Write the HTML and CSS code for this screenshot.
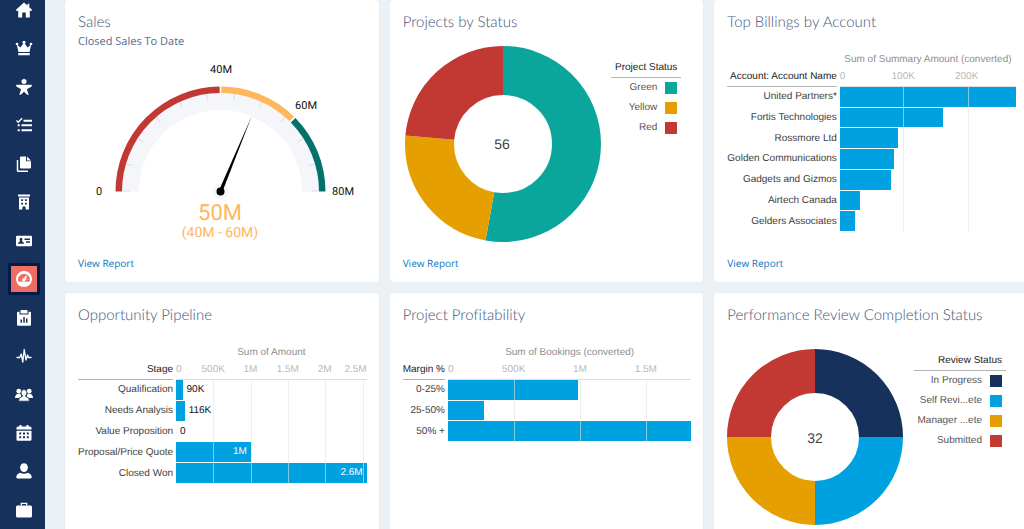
FILE: index.html
```html
<!DOCTYPE html>
<html lang="en">
<head>
<meta charset="utf-8">
<title>Dashboard</title>
<meta name="viewport" content="width=device-width, initial-scale=1">
<link rel="stylesheet" href="styles.css">
</head>
<body>
<nav class="sidebar" aria-label="Main">
  <ul class="nav-list">
    <li><a class="nav-link" href="#home" aria-label="Home"><svg viewBox="0 0 16 16"><path d="M8 .4 0 7.800v.9h2.200v6.700h4V10.500h3.600v4.900h4V8.700H16v-.9L13.300 5.200V1.800h-1.800v1.700z"/></svg></a></li>
    <li><a class="nav-link" href="#leaders" aria-label="Leaders"><svg viewBox="0 0 16 16"><circle cx="8" cy="2.300" r="1.500"/><circle cx="1" cy="4" r="1.300"/><circle cx="15" cy="4" r="1.300"/><path d="M.8 4.500 4.500 7.500 8 2.500l3.500 5 3.700-3-1.700 7.500h-11zM2.300 13h11.400v2.200H2.300z"/></svg></a></li>
    <li><a class="nav-link" href="#people" aria-label="People"><svg viewBox="0 0 16 16"><circle cx="8" cy="2.500" r="2.500"/><path d="M.3 5.800h15.400v1.700l-4.800 2.700 1.800 5.500h-1.500L8 12.700l-3.200 3H3.300l1.800-5.500L.3 7.500z"/></svg></a></li>
    <li><a class="nav-link" href="#tasks" aria-label="Tasks"><svg viewBox="0 0 16 16"><path d="M.5 3.500 2.300 5.200 6 1.200" fill="none" stroke="currentColor" stroke-width="1.500"/><path d="M7.500 2.700H16v2H7.500zM5.500 7.200H16v2H5.500zM5.500 12.200H16v2H5.500zM1.700 7.200h2v2h-2zM1.700 12.200h2v2h-2z"/></svg></a></li>
    <li><a class="nav-link" href="#files" aria-label="Files"><svg viewBox="0 0 16 16"><path d="M5 .5h5v4.800h5v6.200q0 1-1 1H5q-1 0-1-1v-10q0-1 1-1zM11 .5l4 3.900h-4z"/><path d="M1.500 4v10.500q0 .8.8.8H12" fill="none" stroke="currentColor" stroke-width="1.500"/></svg></a></li>
    <li><a class="nav-link" href="#accounts" aria-label="Accounts"><svg viewBox="0 0 16 16"><path fill-rule="evenodd" d="M2 .5h12v2H2zM3 3.500h10v12H9.500v-3h-3v3H3zM5.200 5.200v1.800h1.800V5.200zM9 5.200v1.800h1.800V5.200zM5.200 8.700v1.800h1.800V8.700zM9 8.700v1.800h1.800V8.700z"/></svg></a></li>
    <li><a class="nav-link" href="#contacts" aria-label="Contacts"><svg viewBox="0 0 16 16"><path fill-rule="evenodd" d="M1.200 2.800h13.600Q16 2.800 16 4v8q0 1.200-1.200 1.200H1.200Q0 13.200 0 12V4q0-1.200 1.200-1.200zM5 4.800a1.500 1.700 0 0 0-1 2.900v.6Q2 9 2 10.700h6Q8 9 6 8.300v-.6A1.500 1.700 0 0 0 5 4.800zM8.500 5.500V7H14V5.500zM10 8.300v1.500h4V8.300z"/></svg></a></li>
    <li><a class="nav-link is-active" href="#dashboards" aria-label="Dashboards" aria-current="page"><svg viewBox="0 0 16 16"><path fill-rule="evenodd" d="M8 0a8 8 0 1 0 0 16A8 8 0 0 0 8 0zM2 8.800a6 6 0 0 1 12 0h-2.300L9.500 9a1.700 1.700 0 1 1-1.800-1.800L10 4.500l1 .6-1.300 3.500 4.300.2a6 6 0 0 1-.6 2H2.600a6 6 0 0 1-.6-2z"/></svg></a></li>
    <li><a class="nav-link" href="#reports" aria-label="Reports"><svg viewBox="0 0 16 16"><path fill-rule="evenodd" d="M4.500 0h7v3.500h-7zM2 1.700h1.500v2.800h9V1.700H14q1 0 1 1v12q0 1-1 1H2q-1 0-1-1v-12q0-1 1-1zM4.500 9.500v3.300H6V9.500zM7.300 7v5.800h1.500V7zM10 8.500v4.300h1.500V8.500z"/></svg></a></li>
    <li><a class="nav-link" href="#activity" aria-label="Activity"><svg viewBox="0 0 16 16"><path d="M1 9.500h2.700L5.200 6l1.600 8L8.200 1.500 10 12l1.500-5 1 2.500H15" fill="none" stroke="currentColor" stroke-width="1.300" stroke-linejoin="round" stroke-linecap="round"/></svg></a></li>
    <li><a class="nav-link" href="#groups" aria-label="Groups"><svg viewBox="1 0 16 16"><circle cx="3.800" cy="4.200" r="2.400"/><circle cx="14.200" cy="4.200" r="2.400"/><path d="M0 11q0-3.500 3-4.300h2.500l1 3L4 11zM18 11q0-3.500-3-4.300h-2.500l-1 3L14 11z"/><path d="M9 2.500a3 3.300 0 0 1 1.700 6v1q3.800.8 3.800 4.700h-11q0-3.900 3.800-4.700v-1A3 3.300 0 0 1 9 2.500z" stroke="#16325c" stroke-width=".8"/></svg></a></li>
    <li><a class="nav-link" href="#calendar" aria-label="Calendar"><svg viewBox="0 0 16 16"><path fill-rule="evenodd" d="M3.500 0h2v1.500h5V0h2v1.500H14q1.500 0 1.500 1.500v1.500H.5V3Q.5 1.500 2 1.500h1.500zM.5 5.700h15v8.800q0 1.300-1.300 1.300H1.800Q.5 15.800.5 14.500zM3.200 7.500v2h2v-2zM7 7.500v2h2v-2zM10.800 7.500v2h2v-2zM3.200 11.200v2h2v-2zM7 11.200v2h2v-2zM10.800 11.200v2h2v-2z"/></svg></a></li>
    <li><a class="nav-link" href="#profile" aria-label="Profile"><svg viewBox="0 0 16 16"><ellipse cx="8" cy="4.600" rx="3.900" ry="4.400"/><path d="M.3 14q0-3 4-4.300 3.700 2.300 7.400 0 4 1.300 4 4.300 0 1.500-1.500 1.500H1.800Q.3 15.500.3 14z"/></svg></a></li>
    <li><a class="nav-link" href="#business" aria-label="Business"><svg viewBox="0 0 16 16"><path d="M5.300 3.500V1.400h5.400v2.100" fill="none" stroke="currentColor" stroke-width="1.200"/><rect y="3.500" width="16" height="12" rx="1.500"/></svg></a></li>
  </ul>
</nav>

<main class="dashboard">
  <section class="card">
    <h2 class="card-title">Sales</h2>
    <p class="card-subtitle">Closed Sales To Date</p>
    <svg class="gauge" viewBox="0 0 288 184" role="img" aria-label="Closed sales gauge">
      <path d="M52.500 131.500a90 90 0 0 1 180 0" fill="none" stroke="#f4f6f9" stroke-width="17"/>
      <g stroke="#d8dde6" stroke-width="1">
        <path d="M44.500 131h7"/>
        <path d="M44.500 131.500h6" transform="rotate(16.360 142.500 131.500)"/>
        <path d="M44.500 131.500h6" transform="rotate(32.730 142.500 131.500)"/>
        <path d="M44.500 131.500h6" transform="rotate(49.090 142.500 131.500)"/>
        <path d="M44.500 131.500h6" transform="rotate(65.450 142.500 131.500)"/>
        <path d="M44.500 131.500h6" transform="rotate(81.820 142.500 131.500)"/>
        <path d="M44.500 131.500h6" transform="rotate(98.180 142.500 131.500)"/>
        <path d="M44.500 131.500h6" transform="rotate(114.550 142.500 131.500)"/>
        <path d="M44.500 131.500h6" transform="rotate(130.910 142.500 131.500)"/>
        <path d="M44.500 131.500h6" transform="rotate(147.270 142.500 131.500)"/>
        <path d="M44.500 131.500h6" transform="rotate(163.640 142.500 131.500)"/>
        <path d="M233.500 131h7"/>
      </g>
      <g fill="none" stroke-width="6.500">
        <path d="M40.750 131.500a101.750 101.750 0 0 1 203.500 0" pathLength="180" stroke="#c23934" stroke-dasharray="89.500 300"/>
        <path d="M40.750 131.500a101.750 101.750 0 0 1 203.500 0" pathLength="180" stroke="#ffb75d" stroke-dasharray="44 300" stroke-dashoffset="-90.500"/>
        <path d="M40.750 131.500a101.750 101.750 0 0 1 203.500 0" pathLength="180" stroke="#04716b" stroke-dasharray="44.500 300" stroke-dashoffset="-135.500"/>
      </g>
      <circle cx="142.500" cy="131.500" r="8" fill="#f4f6f9"/>
      <path d="M140.700 131.500 142.500 49.500 144.300 131.500z" transform="rotate(22.500 142.500 131.500)"/>
      <circle cx="142.500" cy="131.500" r="4"/>
      <g class="gauge-label">
        <text x="21" y="135" text-anchor="middle">0</text>
        <text x="143" y="13" text-anchor="middle">40M</text>
        <text x="228" y="49" text-anchor="middle">60M</text>
        <text x="265" y="135" text-anchor="middle">80M</text>
      </g>
      <text class="gauge-value" x="142" y="160" text-anchor="middle">50M</text>
      <text class="gauge-range" x="142" y="177" text-anchor="middle">(40M - 60M)</text>
    </svg>
    <a class="card-link" href="#sales-report">View Report</a>
  </section>

  <section class="card">
    <h2 class="card-title">Projects by Status</h2>
    <div class="donut-chart">
      <svg class="donut donut-large" viewBox="0 0 196 196" role="img" aria-label="56 projects">
        <g fill="none" stroke-width="49" transform="rotate(-90 98 98)">
          <circle cx="98" cy="98" r="73.500" pathLength="360" stroke="#0aa69c" stroke-dasharray="190.300 360"/>
          <circle cx="98" cy="98" r="73.500" pathLength="360" stroke="#e69f00" stroke-dasharray="84.700 360" stroke-dashoffset="-190.300"/>
          <circle cx="98" cy="98" r="73.500" pathLength="360" stroke="#c23934" stroke-dasharray="85 360" stroke-dashoffset="-275"/>
        </g>
        <text class="donut-total" x="97" y="103" text-anchor="middle">56</text>
      </svg>
      <div class="legend">
        <h3 class="legend-title">Project Status</h3>
        <ul class="legend-list">
          <li>Green<i class="swatch teal"></i></li>
          <li>Yellow<i class="swatch yellow"></i></li>
          <li>Red<i class="swatch red"></i></li>
        </ul>
      </div>
    </div>
    <a class="card-link" href="#status-report">View Report</a>
  </section>

  <section class="card">
    <h2 class="card-title">Top Billings by Account</h2>
    <div class="bar-chart">
      <div class="labels">
        <h3 class="labels-title">Account: Account Name</h3>
        <ul class="rows rows-7">
          <li>United Partners*</li>
          <li>Fortis Technologies</li>
          <li>Rossmore Ltd</li>
          <li>Golden Communications</li>
          <li>Gadgets and Gizmos</li>
          <li>Airtech Canada</li>
          <li>Gelders Associates</li>
        </ul>
      </div>
      <div class="plot">
        <h3 class="axis-title">Sum of Summary Amount (converted)</h3>
        <div class="axis"><span class="tick tick-first">0</span><span class="tick" style="left:36%">100K</span><span class="tick" style="left:72%">200K</span></div>
        <div class="rows rows-7 bars">
          <div class="bar" style="width:100%"></div>
          <div class="bar" style="width:58.400%"></div>
          <div class="bar" style="width:32.800%"></div>
          <div class="bar" style="width:30.700%"></div>
          <div class="bar" style="width:29.300%"></div>
          <div class="bar" style="width:11.200%"></div>
          <div class="bar" style="width:8.400%"></div>
          <i class="gridline" style="left:36%"></i><i class="gridline" style="left:72.500%"></i>
        </div>
      </div>
    </div>
    <a class="card-link" href="#billings-report">View Report</a>
  </section>

  <section class="card">
    <h2 class="card-title">Opportunity Pipeline</h2>
    <div class="bar-chart">
      <div class="labels">
        <h3 class="labels-title">Stage</h3>
        <ul class="rows rows-5">
          <li>Qualification</li>
          <li>Needs Analysis</li>
          <li>Value Proposition</li>
          <li>Proposal/Price Quote</li>
          <li>Closed Won</li>
        </ul>
      </div>
      <div class="plot">
        <h3 class="axis-title">Sum of Amount</h3>
        <div class="axis"><span class="tick tick-first">0</span><span class="tick" style="left:19.500%">500K</span><span class="tick" style="left:39%">1M</span><span class="tick" style="left:58.600%">1.5M</span><span class="tick" style="left:78%">2M</span><span class="tick tick-last">2.5M</span></div>
        <div class="rows rows-5 bars">
          <div class="bar-row"><div class="bar" style="width:3.400%"></div><span class="value">90K</span></div>
          <div class="bar-row"><div class="bar" style="width:4.500%"></div><span class="value">116K</span></div>
          <div class="bar-row"><span class="value">0</span></div>
          <div class="bar" style="width:39.300%"><span class="value-inside">1M</span></div>
          <div class="bar" style="width:100%"><span class="value-inside">2.6M</span></div>
          <i class="gridline" style="left:19.500%"></i><i class="gridline" style="left:39.100%"></i><i class="gridline" style="left:58.700%"></i><i class="gridline" style="left:78.300%"></i><i class="gridline" style="left:97.900%"></i>
        </div>
      </div>
    </div>
  </section>

  <section class="card">
    <h2 class="card-title">Project Profitability</h2>
    <div class="bar-chart">
      <div class="labels">
        <h3 class="labels-title">Margin %</h3>
        <ul class="rows rows-3">
          <li>0-25%</li>
          <li>25-50%</li>
          <li>50% +</li>
        </ul>
      </div>
      <div class="plot">
        <h3 class="axis-title">Sum of Bookings (converted)</h3>
        <div class="axis"><span class="tick tick-first">0</span><span class="tick" style="left:27%">500K</span><span class="tick" style="left:54.200%">1M</span><span class="tick" style="left:81.300%">1.5M</span></div>
        <div class="rows rows-3 bars">
          <div class="bar" style="width:53.500%"></div>
          <div class="bar" style="width:14.800%"></div>
          <div class="bar" style="width:100%"></div>
          <i class="gridline" style="left:27.100%"></i><i class="gridline" style="left:54.200%"></i><i class="gridline" style="left:81.300%"></i>
        </div>
      </div>
    </div>
  </section>

  <section class="card">
    <h2 class="card-title">Performance Review Completion Status</h2>
    <div class="donut-chart">
      <svg class="donut donut-small" viewBox="0 0 176 176" role="img" aria-label="32 reviews">
        <g fill="none" stroke-width="44" transform="rotate(-90 88 88)">
          <circle cx="88" cy="88" r="66" pathLength="360" stroke="#16325c" stroke-dasharray="90 360"/>
          <circle cx="88" cy="88" r="66" pathLength="360" stroke="#00a1e0" stroke-dasharray="90 360" stroke-dashoffset="-90"/>
          <circle cx="88" cy="88" r="66" pathLength="360" stroke="#e69f00" stroke-dasharray="90 360" stroke-dashoffset="-180"/>
          <circle cx="88" cy="88" r="66" pathLength="360" stroke="#c23934" stroke-dasharray="90 360" stroke-dashoffset="-270"/>
        </g>
        <text class="donut-total" x="88" y="94" text-anchor="middle">32</text>
      </svg>
      <div class="legend">
        <h3 class="legend-title">Review Status</h3>
        <ul class="legend-list">
          <li>In Progress<i class="swatch navy"></i></li>
          <li>Self Revi...ete<i class="swatch blue"></i></li>
          <li>Manager ...ete<i class="swatch yellow"></i></li>
          <li>Submitted<i class="swatch red"></i></li>
        </ul>
      </div>
    </div>
  </section>
</main>
</body>
</html>
```
FILE: styles.css
```css
* {
  box-sizing: border-box;
}

body {
  margin: 0;
  height: 100vh;
  display: flex;
  overflow: hidden;
  background: #ebf1f4;
  color: #3e3e3c;
  font: 10px/16px "Liberation Sans", Arial, sans-serif;
  text-rendering: geometricPrecision;
}

h2, h3, p, ul {
  margin: 0;
  padding: 0;
  font-weight: 400;
  font-size: inherit;
}

ul {
  list-style: none;
}

/* Sidebar */
.sidebar {
  flex: none;
  width: 45px;
  display: flex;
  padding: 0 5px 3px 8px;
  background: #16325c;
}

.nav-list {
  display: flex;
  flex-direction: column;
  justify-content: space-between;
  margin-top: -6px;
}

.nav-link {
  display: flex;
  align-items: center;
  justify-content: center;
  width: 32px;
  height: 32px;
  color: #fff;
}

.nav-link svg {
  flex: none;
  width: 16px;
  height: 16px;
  fill: currentColor;
  overflow: visible;
}

.nav-link.is-active {
  border: 3px solid #04184a;
  border-radius: 2px;
  background: #ef6e64;
}

/* Dashboard grid */
.dashboard {
  flex: 1;
  min-width: 0;
  display: grid;
  grid-template-columns: repeat(3, minmax(0, 1fr));
  grid-template-rows: auto 1fr;
  gap: 11px;
  margin-right: -4px;
  padding-left: 20px;
}

.card {
  display: flex;
  flex-direction: column;
  padding: 12px 12px 9px 13px;
  background: #fff;
  border-radius: 3px;
  box-shadow: 0 0 1px #cfd8e0;
}

.card-title {
  color: #3f557d;
  font: 300 15px/20px Lato, "Open Sans", sans-serif;
  font-variant-ligatures: none;
  white-space: nowrap;
}

.card-subtitle {
  color: #54698d;
  font: 400 11px/20px "Open Sans", "Noto Sans", sans-serif;
}

.card-link {
  align-self: flex-start;
  margin-top: auto;
  color: #1077bd;
  font: 400 10px/20px "Open Sans", "Noto Sans", sans-serif;
  text-decoration: none;
}

/* Gauge */
.gauge {
  width: 288px;
  max-width: 100%;
  margin: 8px 0 9px;
}

.gauge text {
  font-family: Roboto, sans-serif;
}

.gauge-label {
  font-size: 11px;
  fill: #111;
}

.gauge-value {
  font-size: 22px;
  fill: #ffb75d;
}

.gauge-range {
  font-size: 14px;
  fill: #ffb75d;
}

/* Donut charts */
.donut-chart {
  display: flex;
  align-items: flex-start;
  justify-content: space-between;
  padding-right: 10px;
}

.donut {
  flex: none;
}

.donut-large {
  width: 196px;
  margin: 14px 0 10px 2px;
}

.donut-small {
  width: 176px;
  margin-top: 24px;
}

.donut-total {
  font-size: 14px;
  fill: #444;
}

.legend {
  margin-top: 27px;
  text-align: right;
  white-space: nowrap;
}

.legend-title {
  padding: 0 4px;
  border-bottom: 1px solid #b4b4b4;
  color: #222;
  line-height: 18px;
}

.legend-list {
  padding: 0 4px;
  color: #555;
  line-height: 20px;
}

.legend-list li {
  display: flex;
  align-items: center;
  justify-content: flex-end;
  gap: 8px;
}

.swatch {
  width: 12px;
  height: 12px;
}

.teal { background: #0aa69c; }
.yellow { background: #e69f00; }
.red { background: #c23934; }
.navy { background: #16325c; }
.blue { background: #00a1e0; }

/* Bar charts */
.bar-chart {
  display: flex;
  gap: 3px;
  margin-top: 20px;
}

.labels {
  flex: none;
  padding-top: 16px;
  text-align: right;
}

.labels-title {
  border-bottom: 1px solid #b4b4b4;
  color: #222;
  line-height: 18px;
}

.rows {
  display: grid;
  grid-auto-rows: minmax(0, 1fr);
  align-items: center;
}

.rows-7 { height: 145px; }
.rows-5 { height: 104px; }
.rows-3 { height: 62px; }

.plot {
  flex: 1;
}

.axis-title {
  color: #8e8e8e;
  text-align: center;
}

.axis {
  position: relative;
  height: 19px;
  border-bottom: 1px solid #dcdcdc;
  color: #b8b8b8;
  line-height: 18px;
}

.tick {
  position: absolute;
  transform: translateX(-50%);
}

.tick-first {
  left: 0;
  transform: none;
}

.tick-last {
  right: 0;
  transform: none;
}

.bars {
  position: relative;
  align-items: stretch;
}

.bar {
  display: flex;
  align-items: center;
  justify-content: flex-end;
  border-bottom: 1px solid #fff;
  background: #00a1e0;
}

.bar-row {
  display: flex;
}

.value {
  align-self: center;
  padding-left: 4px;
  color: #111;
}

.value-inside {
  padding-right: 4px;
  color: #fff;
}

.gridline {
  position: absolute;
  top: 0;
  bottom: 0;
  width: 1px;
  background: rgba(222, 228, 232, 0.6);
}
```
